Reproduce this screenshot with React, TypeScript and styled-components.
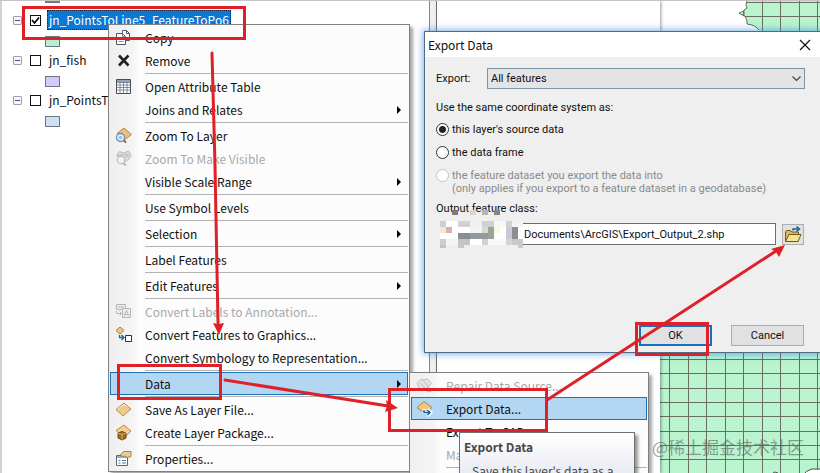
import React from "react";
import styled, { createGlobalStyle, css } from "styled-components";

const GlobalStyle = createGlobalStyle`
  *, *::before, *::after { box-sizing: border-box; }
  html, body { margin: 0; overflow: hidden; }
  body, button, input, select {
    font-family: "Noto Sans CJK SC", sans-serif;
    font-size: 12px;
    color: #101010;
  }
`;

const RED = "#e02029";

/* ---------- workspace ---------- */

const Workspace = styled.div`
  position: relative;
  display: flex;
  height: 100vh;
  overflow: hidden;
  border-top: 1px solid #c4c4c4;
  background: #fff;
`;

const Contents = styled.aside`
  flex: 0 0 430px;
  height: 100%;
  border-left: 2px solid #d2d2d2;
  border-right: 1px solid #858585;
  background: #fff;
`;

const Splitter = styled.div`
  flex: 0 0 7px;
  background: #efefef;
  border-right: 1px solid #777;
`;

const DockPage = styled.div`
  flex: 0 0 223px;
  z-index: 1;
  background: #fff;
  box-shadow: 1px 0 3px rgba(0, 0, 0, 0.4);
`;

const MapPane = styled.main`
  flex: 1;
  min-width: 0;
  background: #fff;
  svg { display: block; }
`;

const LayerList = styled.ul`
  list-style: none;
  margin: 0;
  padding: 0 0 0 11px;
`;

const LayerItem = styled.li`
  height: 40px;
`;

const LayerRow = styled.div`
  display: flex;
  align-items: center;
  height: 20px;
`;

const Expander = styled.button`
  width: 9px;
  height: 9px;
  padding: 0;
  margin-right: 8px;
  display: grid;
  place-items: center;
  border: 1px solid #a2a2a2;
  border-radius: 1px;
  background: #f7f7f7;
  &::before { content: ""; width: 5px; height: 1px; background: #4a4ab0; }
`;

const LayerCheck = styled.input`
  appearance: none;
  width: 11px;
  height: 11px;
  margin: 0 6px 0 0;
  border: 1px solid #111;
  background: #fff;
  &:checked {
    background: #fff
      url("data:image/svg+xml,%3Csvg xmlns='http://www.w3.org/2000/svg' viewBox='0 0 9 9'%3E%3Cpath d='M1 4l2.5 3L8 1.5' fill='none' stroke='%23000' stroke-width='1.7'/%3E%3C/svg%3E")
      center / 9px 9px no-repeat;
  }
`;

const LayerName = styled.label<{ $selected?: boolean }>`
  height: 20px;
  line-height: 17px;
  padding: 0 1px;
  white-space: nowrap;
  border: 1px solid transparent;
  ${(p) => p.$selected && css`
    background: #0a78d6;
    color: #fff;
    border: 1px dotted #222;
  `}
`;

const Swatch = styled.div<{ $color: string }>`
  width: 15px;
  height: 11px;
  margin: 6px 0 0 32px;
  border: 1px solid #70747c;
  background: ${(p) => p.$color};
`;

const LastSwatch = styled(Swatch)`
  height: 10px;
  margin-top: -8px;
  margin-bottom: 7px;
`;

const layers = [
  { name: "jn_PointsToLine5_FeatureToPo6", color: "#b9efd1", on: true },
  { name: "jn_fish", color: "#d2ccfc", on: false },
  { name: "jn_PointsToLine5", color: "#cbe1f6", on: false },
];

/* ---------- menus ---------- */

const MenuBox = styled.div<{ $sub?: boolean }>`
  position: absolute;
  z-index: ${(p) => (p.$sub ? 4 : 3)};
  left: ${(p) => (p.$sub ? 409 : 108)}px;
  top: ${(p) => (p.$sub ? 371 : 23)}px;
  width: ${(p) => (p.$sub ? 240 : 302)}px;
  padding: 1px;
  border: 1px solid #808080;
  background: linear-gradient(90deg, #efefef 0, #f4f4f4 24px, #fcfcfc 30px, #fcfcfc 100%);
  box-shadow: 3px 3px 3px rgba(0, 0, 0, 0.35);
`;

const MenuItem = styled.button<{ $active?: boolean }>`
  display: grid;
  grid-template-columns: 24px 1fr 12px;
  column-gap: 10px;
  align-items: center;
  width: 100%;
  height: 23px;
  padding: 0;
  border: 1px solid ${(p) => (p.$active ? "#1a73b8" : "transparent")};
  background: ${(p) => (p.$active ? "#b3d7f2" : "transparent")};
  text-align: left;
  line-height: 20px;
  white-space: nowrap;
  &:disabled { color: #a9a9a9; }
  svg { display: block; justify-self: center; }
`;

const MenuRule = styled.hr`
  height: 1px;
  margin: 1px 0 1px 35px;
  border: 0;
  background: #b2b2b2;
`;

const Tooltip = styled.div`
  position: absolute;
  z-index: 5;
  left: 459px;
  top: 431px;
  width: 176px;
  padding: 4px;
  border: 1px solid #707070;
  background: linear-gradient(#fff, #e4e6f0);
  box-shadow: 3px 3px 3px rgba(0, 0, 0, 0.4);
  color: #484848;
  white-space: nowrap;
  strong { display: block; line-height: 20px; }
  p { margin: 4px 0 0 8px; line-height: 20px; }
`;

/* ---------- dialog ---------- */

const Dialog = styled.section`
  position: absolute;
  z-index: 3;
  left: 424px;
  right: 0;
  top: 30px;
  border: 1px solid #526a86;
  border-right: 0;
  background: #efefef;
  box-shadow: 0 0 7px 1px rgba(50, 130, 220, 0.65);
  &, select, input, button { font-family: Roboto, sans-serif; font-size: 11px; }
`;

const TitleBar = styled.header`
  display: flex;
  justify-content: space-between;
  align-items: center;
  height: 25px;
  padding: 0 9px 0 3px;
  background: #fff;
  h1 { margin: 0; font: 400 12px/24px "Noto Sans CJK SC", sans-serif; }
`;

const CloseButton = styled.button`
  display: grid;
  place-items: center;
  padding: 0;
  border: 0;
  background: none;
`;

const DialogBody = styled.form`
  padding: 11px 15px 6px 11px;
`;

const ExportRow = styled.div`
  display: flex;
  align-items: center;
  label { flex: 0 0 51px; }
`;

const SelectWrap = styled.div`
  flex: 1;
  display: grid;
  align-items: center;
  & > * { grid-area: 1 / 1; }
  svg { justify-self: end; margin-right: 4px; pointer-events: none; }
`;

const Select = styled.select`
  appearance: none;
  width: 100%;
  height: 21px;
  padding: 0 3px;
  border: 1px solid #7a95a8;
  border-radius: 0;
  background: #e3e4e5;
`;

const Group = styled.fieldset`
  margin: 10px 0 0;
  padding: 0;
  border: 0;
  legend { padding: 0; line-height: 18px; margin-bottom: 1px; }
`;

const RadioLabel = styled.label<{ $off?: boolean }>`
  display: flex;
  align-items: flex-start;
  gap: 3px;
  min-height: 23px;
  line-height: 13px;
  padding-top: 5px;
  white-space: nowrap;
  color: ${(p) => (p.$off ? "#8a8a8a" : "inherit")};
`;

const Radio = styled.input`
  appearance: none;
  flex: none;
  width: 13px;
  height: 13px;
  margin: 0;
  border: 1px solid #333;
  border-radius: 50%;
  background: #fff;
  &:checked { background: radial-gradient(circle, #222 0 3px, #fff 4px); }
  &:disabled { border-color: #c4c4c4; }
`;

const OutputLabel = styled.label`
  display: block;
  margin-top: 6px;
  line-height: 16px;
`;

const OutputRow = styled.div`
  display: flex;
  align-items: center;
  margin: 3px 0 0 4px;
  height: 28px;
  svg { display: block; flex: none; }
`;

const PathInput = styled.input`
  flex: 1;
  min-width: 0;
  height: 22px;
  padding: 0 1px;
  border: 1px solid #6f6f6f;
  border-left: 0;
  background: #fff;
`;

const BrowseButton = styled.button`
  display: grid;
  place-items: center;
  width: 22px;
  height: 21px;
  margin: 0 1px 0 6px;
  padding: 0;
  border: 1px solid #adadad;
  background: #e1e1e1;
`;

const Actions = styled.div`
  display: flex;
  justify-content: flex-end;
  gap: 19px;
  margin: 77px 1px 0 0;
`;

const ActionButton = styled.button<{ $primary?: boolean }>`
  width: 73px;
  height: 21px;
  padding: 0;
  border: ${(p) => (p.$primary ? "2px solid #1670c0" : "1px solid #adadad")};
  background: #e1e1e3;
`;

/* ---------- overlays ---------- */

const Watermark = styled.div`
  position: absolute;
  z-index: 6;
  right: 16px;
  top: 433px;
  font: 17px/26px "Noto Sans CJK SC", sans-serif;
  color: rgba(90, 95, 92, 0.6);
  white-space: nowrap;
`;

const Marks = styled.svg`
  position: absolute;
  z-index: 7;
  left: 0;
  top: -1px;
  pointer-events: none;
`;

/* ---------- icons ---------- */

const Icon = ({ name }: { name?: string }) => {
  const body = name ? icons[name] : null;
  return (
    <svg width="17" height="17" viewBox="0 0 17 17" aria-hidden="true">
      {body}
    </svg>
  );
};

const Diamond = ({ fill = "#f0c987", stroke = "#b58b4a" }) => (
  <g>
    <path d="M1 8.5L9 2l7 6-8 7z" fill={fill} stroke={stroke} />
    <path d="M2.5 8.2L9 3.4l3 2.4" fill="none" stroke="#fff" strokeOpacity=".7" />
  </g>
);

const icons: Record<string, React.ReactNode> = {
  copy: (
    <g fill="#fff" stroke="#4e5663">
      <path d="M7.500 1.500h4l3 3v7h-7z" />
      <path d="M11.500 1.500v3h3" fill="none" />
      <path d="M1.500 4.500h6l3 3v8h-9z" />
      <path d="M7.500 4.500v3h3M3.500 8.500h3M3.500 10.500h5M3.500 12.500h5" fill="none" stroke="#7d8fae" />
    </g>
  ),
  remove: <path d="M4 3.500l9.500 10M13.500 3.500L4 13.500" fill="none" stroke="#222" strokeWidth="2.600" />,
  table: (
    <g>
      <path d="M1.500 1.500h14v14h-14z" fill="#fff" stroke="#444b55" />
      <path d="M2 2h13v2.500H2z" fill="#8fa5bd" />
      <path d="M1.500 4.500h14M1.500 7h14M1.500 9.500h14M1.500 12h14M5 4v11.500M8.500 4v11.500M12 4v11.500" stroke="#6d747e" strokeWidth=".8" />
    </g>
  ),
  zoomLayer: (
    <g>
      <path d="M2 6.500L9 1l7.500 6.500-7 5.500z" fill="#eebf78" stroke="#b58646" />
      <path d="M8 13l3 2.500" stroke="#8d6336" strokeWidth="2" />
      <circle cx="5.500" cy="10.500" r="4" fill="#e4f3ff" stroke="#5d92c4" strokeWidth="1.300" />
      <circle cx="5.500" cy="10.500" r="1.800" fill="#8fc4ee" />
    </g>
  ),
  zoomVisible: (
    <g fill="#dedede" stroke="#b8b8b8">
      <path d="M1.500 5l3-3.500 4 1.500 5-2L16 5l-2 4-6 4z" />
      <path d="M3 5.500l10-1M9 8l5-3" />
      <path d="M8 13l3 2.500" strokeWidth="2" />
      <circle cx="6" cy="10" r="3.800" fill="#f3f3f3" />
    </g>
  ),
  labels: (
    <g fill="#eee" stroke="#b6b6b6">
      <path d="M1.500 1.500h9v5h-9zM3 4h6" />
      <path d="M7.500 5.500h8v9h-8z" />
      <path d="M9 13l2.500-5.500 2.500 5.500M10 11.500h3M1.500 8v2.500h5M4.500 8.500l2 2-2 2" fill="none" />
    </g>
  ),
  graphics: (
    <g>
      <path d="M1 4.500L5 1l4 3.500L5 8z" fill="#efc580" stroke="#aa8043" />
      <path d="M4.500 9v2.500h4M6.500 9l2.500 2.500-2.500 2.500" fill="none" stroke="#17659a" strokeWidth="1.300" />
      <path d="M10.500 9.500h6v6h-6z" fill="#fff" stroke="#333" />
    </g>
  ),
  layerFile: <Diamond />,
  package: (
    <g>
      <path d="M1 6.500L9 1l7 6-7 7z" fill="#f3cf91" stroke="#b98b46" />
      <path d="M3 9l4-1.500L11 9v5l-4 2-4-2z" fill="#9c6a28" stroke="#6f4818" />
      <path d="M3 9l4 1.500v5M7 10.500L11 9" fill="none" stroke="#dfad5e" />
    </g>
  ),
  properties: (
    <g>
      <path d="M1.500 5.500h11v10h-11z" fill="#fff" stroke="#59677a" />
      <path d="M2 6h10v2H2z" fill="#8eb0d6" />
      <path d="M3.500 10.500h2M7 10.500h4M3.500 13h2M7 13h4" stroke="#5c7594" />
      <path d="M5.500 4.500L9 1.500h7v5l-3.500 1-3-1.500L7 7z" fill="#eccb94" stroke="#a5834f" />
    </g>
  ),
  repair: (
    <g fill="#e3e3e3" stroke="#bdbdbd">
      <path d="M1 6l4-4 3 1 3-1.500 4.500 5-3 3 2.500 5-3 .5-3-3-3 2-3-3z" />
      <path d="M4 6l6 6M7 3.500l5 5.500M11 10l2.500 4.500" fill="none" />
    </g>
  ),
  exportData: (
    <g>
      <path d="M1 7.500L8 1.500l8 6-7 6z" fill="#f0c67f" stroke="#b08448" />
      <path d="M8 9v3.500h6M11.500 9l3.500 3.500-3.500 3.500" fill="none" stroke="#fff" strokeWidth="3" />
      <path d="M8 10v2.500h6M11.500 10l2.500 2.500-2.500 2.500" fill="none" stroke="#19659a" strokeWidth="1.500" />
    </g>
  ),
  metadata: <path d="M2.500 2.500h11v12h-11z" fill="#8aa0c4" stroke="#56698c" />,
};

type Entry = { label: string; icon?: string; off?: boolean; arrow?: boolean; active?: boolean } | null;

const contextEntries: Entry[] = [
  { label: "Copy", icon: "copy" },
  { label: "Remove", icon: "remove" },
  null,
  { label: "Open Attribute Table", icon: "table" },
  { label: "Joins and Relates", arrow: true },
  null,
  { label: "Zoom To Layer", icon: "zoomLayer" },
  { label: "Zoom To Make Visible", icon: "zoomVisible", off: true },
  { label: "Visible Scale Range", arrow: true },
  null,
  { label: "Use Symbol Levels" },
  null,
  { label: "Selection", arrow: true },
  null,
  { label: "Label Features" },
  null,
  { label: "Edit Features", arrow: true },
  null,
  { label: "Convert Labels to Annotation...", icon: "labels", off: true },
  { label: "Convert Features to Graphics...", icon: "graphics" },
  { label: "Convert Symbology to Representation..." },
  null,
  { label: "Data", arrow: true, active: true },
  null,
  { label: "Save As Layer File...", icon: "layerFile" },
  { label: "Create Layer Package...", icon: "package" },
  null,
  { label: "Properties...", icon: "properties" },
];

const dataEntries: Entry[] = [
  { label: "Repair Data Source...", icon: "repair", off: true },
  { label: "Export Data...", icon: "exportData", active: true },
  { label: "Export To CAD..." },
  { label: "Make Permanent", off: true },
  null,
  { label: "View Item Description...", icon: "metadata" },
];

const Menu = ({ entries, sub }: { entries: Entry[]; sub?: boolean }) => (
  <MenuBox $sub={sub} role="menu">
    {entries.map((e, i) =>
      e ? (
        <MenuItem key={i} type="button" role="menuitem" disabled={e.off} $active={e.active}>
          <Icon name={e.icon} />
          <span>{e.label}</span>
          {e.arrow && (
            <svg width="12" height="8" viewBox="0 0 12 8" aria-hidden="true">
              <path d="M2 0l4 4-4 4z" fill="#000" />
            </svg>
          )}
        </MenuItem>
      ) : (
        <MenuRule key={i} />
      )
    )}
  </MenuBox>
);

const columns = [669, 688, 706, 725, 743, 762, 780, 799, 817];
const gridRows = [2, 16, 31, 359, 373, 388, 402, 416, 431, 445, 459];

const GridMap = () => (
  <svg width="160" height="472" viewBox="660 1 160 472" aria-label="Fishnet map">
    <defs>
      <clipPath id="land">
        <path d="M747 0l-1 5 1 3-3 2-1 2-4 2 4 2h2l2 5v3l5 1 4 2 3 3v6H820V0zM660 340H820V470l-6-1-8 3-2 3H660z" />
      </clipPath>
    </defs>
    <g clipPath="url(#land)">
      <rect x="660" width="160" height="473" fill="#b9f4cf" />
      <g stroke="#6b6e60">
        {columns.map((x) => <path key={x} d={`M${x + 0.5} 0V473`} />)}
        {gridRows.map((y) => <path key={y} d={`M660 ${y + 0.5}H820`} />)}
      </g>
    </g>
    <path d="M747 0l-1 5 1 3-3 2v6l-5-3 5-2M744 16h1l2 5v3l5 1 4 2 3 3" fill="none" stroke="#63705f" />
    <path d="M804 474l3-3 5-2h8M773 473l2-1 3 1" fill="none" stroke="#555" />
  </svg>
);

const mosaic: [number, number, number, number, string][] = [
  [0, 0, 6, 6, "#cfcfcf"], [6, 0, 12, 6, "#fff"], [18, 0, 12, 6, "#d2d2d2"], [30, 0, 12, 6, "#efefef"], [42, 0, 12, 6, "#d0d0d0"], [54, 0, 12, 6, "#f7f7f7"], [66, 0, 6, 6, "#d2d2d2"], [72, 0, 11, 6, "#f3f3f3"],
  [0, 6, 6, 6, "#f5e6da"], [6, 6, 6, 6, "#d5b3ac"], [12, 6, 18, 6, "#fff"], [30, 6, 12, 6, "#eef3f3"], [42, 6, 6, 6, "#d9d9cc"], [48, 6, 6, 12, "#9da39c"], [54, 6, 6, 6, "#fafad8"], [60, 6, 6, 12, "#fff"], [66, 6, 6, 12, "#cbc8d4"], [72, 6, 6, 12, "#8f8b91"], [78, 6, 5, 12, "#fff"],
  [0, 12, 18, 6, "#fff"], [18, 12, 12, 6, "#88908f"], [30, 12, 6, 6, "#8c9aa8"], [36, 12, 12, 6, "#949a9a"], [54, 12, 6, 6, "#fff"],
  [0, 18, 6, 6, "#cdcdcd"], [6, 18, 12, 6, "#f4f4f4"], [18, 18, 12, 6, "#c4c4c4"], [30, 18, 12, 6, "#fff"], [42, 18, 6, 6, "#d0d0d0"], [48, 18, 18, 6, "#f8f8f8"], [66, 18, 6, 6, "#d4d4d4"], [72, 18, 11, 6, "#c9c9c9"],
  [0, 24, 6, 3, "#c2c2c2"], [18, 24, 6, 3, "#c7c7c7"], [78, 24, 5, 3, "#c9c9c9"],
];

export default function App() {
  return (
    <>
      <GlobalStyle />
      <Workspace>
        <Contents aria-label="Table of contents">
          <LayerList>
            <li><LastSwatch $color="#e03ae6" /></li>
            {layers.map((l, i) => (
              <LayerItem key={l.name}>
                <LayerRow>
                  <Expander type="button" aria-label={`Collapse ${l.name}`} />
                  <LayerCheck type="checkbox" id={`layer${i}`} defaultChecked={l.on} />
                  <LayerName htmlFor={`layer${i}`} $selected={l.on}>{l.name}</LayerName>
                </LayerRow>
                <Swatch $color={l.color} />
              </LayerItem>
            ))}
          </LayerList>
        </Contents>
        <Splitter />
        <DockPage />
        <MapPane><GridMap /></MapPane>

        <Dialog role="dialog" aria-labelledby="dialogTitle">
          <TitleBar>
            <h1 id="dialogTitle">Export Data</h1>
            <CloseButton type="button" aria-label="Close">
              <svg width="12" height="12" viewBox="0 0 12 12">
                <path d="M1 1l10 10M11 1L1 11" stroke="#111" strokeWidth="1.200" />
              </svg>
            </CloseButton>
          </TitleBar>
          <DialogBody onSubmit={(e) => e.preventDefault()}>
            <ExportRow>
              <label htmlFor="scope">Export:</label>
              <SelectWrap>
                <Select id="scope"><option>All features</option></Select>
                <svg width="9" height="6" viewBox="0 0 9 6" aria-hidden="true">
                  <path d="M.5.5l4 4 4-4" fill="none" stroke="#444" strokeWidth="1.200" />
                </svg>
              </SelectWrap>
            </ExportRow>
            <Group>
              <legend>Use the same coordinate system as:</legend>
              <RadioLabel><Radio type="radio" name="cs" defaultChecked />this layer's source data</RadioLabel>
              <RadioLabel><Radio type="radio" name="cs" />the data frame</RadioLabel>
              <RadioLabel $off>
                <Radio type="radio" name="cs" disabled />
                <span>the feature dataset you export the data into<br />(only applies if you export to a feature dataset in a geodatabase)</span>
              </RadioLabel>
            </Group>
            <OutputLabel htmlFor="output">Output feature class:</OutputLabel>
            <OutputRow>
              <svg width="83" height="26" viewBox="0 0 83 26" overflow="visible" aria-hidden="true">
                {mosaic.map(([x, y, w, h, c], i) => <rect key={i} x={x} y={y} width={w} height={h} fill={c} />)}
                <g>
                  <rect x="12" y="-11" width="6" height="5" fill="#7d7d72" />
                  <rect x="30" y="-11" width="6" height="5" fill="#d6d6d6" />
                  <rect x="42" y="-11" width="6" height="5" fill="#b5b5b5" />
                  <rect x="54" y="-11" width="6" height="5" fill="#86867c" />
                </g>
              </svg>
              <PathInput id="output" defaultValue="Documents\ArcGIS\Export_Output_2.shp" />
              <BrowseButton type="button" aria-label="Browse">
                <svg width="18" height="17" viewBox="0 0 18 17">
                  <path d="M1.500 15V5.500l1-1h4l1.500 1.500h6.500V15z" fill="#d9b95a" stroke="#6f5b20" />
                  <path d="M1.500 15.500L5 8.500h12l-3 7z" fill="#f8e28c" stroke="#6f5b20" />
                  <path d="M9 4.500V3h5M12.500.5L15.500 3l-3 2.500" fill="none" stroke="#175e92" strokeWidth="1.500" />
                </svg>
              </BrowseButton>
            </OutputRow>
            <Actions>
              <ActionButton type="submit" $primary>OK</ActionButton>
              <ActionButton type="button">Cancel</ActionButton>
            </Actions>
          </DialogBody>
        </Dialog>

        <Menu entries={contextEntries} />
        <Menu entries={dataEntries} sub />
        <Tooltip role="tooltip">
          <strong>Export Data</strong>
          <p>Save this layer's data as a</p>
        </Tooltip>

        <Watermark>@稀土掘金技术社区</Watermark>

        <Marks width="820" height="473" viewBox="0 0 820 473" aria-hidden="true">
          <g fill="none" stroke={RED} strokeWidth="3">
            <path d="M23.500 7.500h221v31h-221z" />
            <path d="M118.500 365.500h102v33h-102z" />
            <path d="M389.500 389.500h157v41h-157z" />
            <path d="M636.500 323.500h71v31h-71z" />
            <path d="M212 53l3 112 3 158" strokeLinecap="round" />
            <path d="M225 380l163 26" strokeLinecap="round" />
            <path d="M547 400L776 251" />
          </g>
          <g fill={RED}>
            <path d="M219 335l-6-12 5 1 6-1z" />
            <path d="M398 408l-13 4 2-6-1-6z" />
            <path d="M785 245l-6 12-3-5-5-3z" />
          </g>
        </Marks>
      </Workspace>
    </>
  );
}
